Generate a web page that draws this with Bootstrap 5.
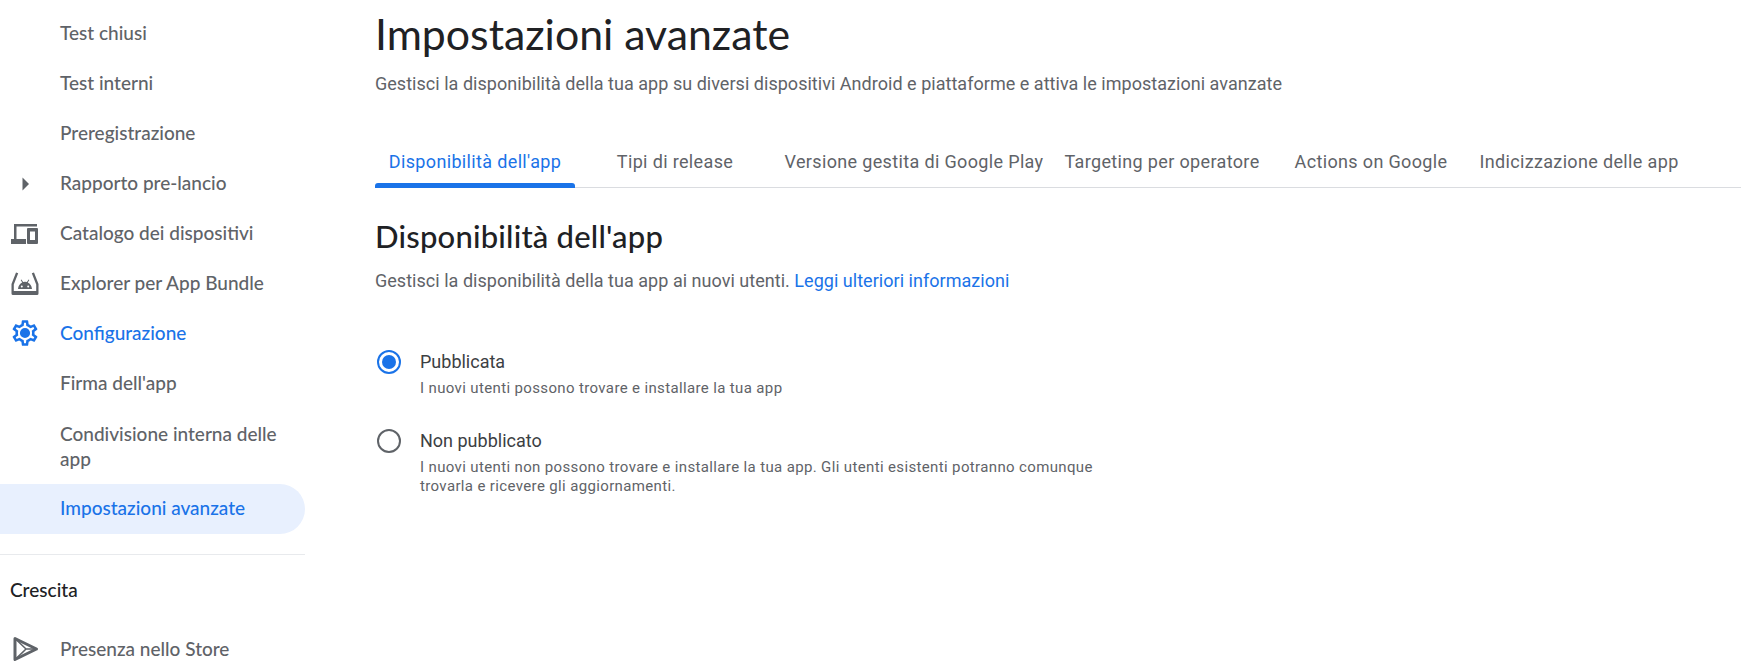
<!DOCTYPE html>
<html lang="it">
<head>
<meta charset="utf-8">
<title>Impostazioni avanzate</title>
<link href="https://cdn.jsdelivr.net/npm/bootstrap@5.3.0/dist/css/bootstrap.min.css" rel="stylesheet">
<style>
html,body{height:670px;overflow:hidden;background:#fff}
body{font-family:Roboto,"Liberation Sans",sans-serif;color:#5f6368}
.pg{height:670px}
.sb{width:305px;flex:none;font-family:Lato,"Noto Sans",sans-serif;padding-top:8px}
.sb-item{height:50px;display:flex;align-items:center;font-size:19px;color:#5f6368;text-decoration:none;position:relative;padding-left:60px;font-weight:500}
.sb-item svg{position:absolute;left:11px;top:11px;width:28px;height:28px}
.sb-item.sel{color:#1a73e8}
.sb-two{height:76px;line-height:25px;padding-right:20px}
.sb-on{background:#e8f0fe;color:#1a73e8;border-radius:0 25px 25px 0;padding-bottom:2px}
.sb-rule{border-top:1px solid #e8eaed;margin:20px 0 0}
.sb-head{font-size:19px;color:#202124;padding:21px 0 0 10px;height:69px;font-weight:500}
.mn{flex:1;min-width:0;padding-left:70px}
.ttl{font-family:Lato,"Noto Sans",sans-serif;font-size:42.8px;font-weight:400;color:#202124;line-height:50px;margin:9px 0 0}
.subt{font-size:18px;line-height:24px;margin:13px 0 0;letter-spacing:.03px}
.tabs{border-bottom:1px solid #dadce0;height:51px;margin-top:41px;padding:0;list-style:none;flex-wrap:nowrap}
.tb{display:block;position:relative;height:50px;line-height:50px;text-align:center;font-size:18px;font-weight:400;color:#5f6368;text-decoration:none;white-space:nowrap;letter-spacing:.35px;flex:none}
.tb.act{color:#1a73e8}
.tb.act::after{content:"";position:absolute;left:0;right:0;bottom:-1px;height:5px;background:#1a73e8;border-radius:3px 3px 0 0}
.tw1,.tw2,.tw5{width:200px}.tw3{width:278px}.tw4{width:218px}.tw6{width:216px}
.h2x{font-family:Lato,"Noto Sans",sans-serif;font-size:31px;font-weight:500;color:#202124;line-height:36px;margin:30px 0 0;letter-spacing:.2px}
.dsc{font-size:18px;line-height:24px;margin:15px 0 0;letter-spacing:.03px}
.dsc a{color:#1a73e8;text-decoration:none}
.opt{display:flex;width:720px}
.o1{margin-top:55px}.o2{margin-top:29px}
.rd{width:24px;height:24px;border-radius:50%;border:2px solid #5f6368;flex:none;margin:2px 19px 0 2px;display:flex;align-items:center;justify-content:center}
.rd.on{border-color:#1a73e8}
.rd.on::after{content:"";width:14px;height:14px;border-radius:50%;background:#1a73e8}
.olbl{font-size:18px;line-height:28px;color:#3c4043}
.osub{font-size:15px;line-height:19px;letter-spacing:.36px;color:#5f6368;padding-top:3px}
</style>
</head>
<body>
<div class="pg d-flex">
  <nav class="sb">
    <a class="sb-item" href="#">Test chiusi</a>
    <a class="sb-item" href="#">Test interni</a>
    <a class="sb-item" href="#">Preregistrazione</a>
    <a class="sb-item" href="#"><svg viewBox="0 0 28 28"><path d="M11.500 8.500 18 15l-6.500 6.500z" fill="#5f6368"/></svg>Rapporto pre-lancio</a>
    <a class="sb-item" href="#"><svg viewBox="0 0 28 28" fill="#5f6368"><path fill-rule="evenodd" d="M3 5h23v2.500H5.500V20H15v5H0v-5h3zM17 9h9a1 1 0 0 1 1 1v14a1 1 0 0 1-1 1h-9a1 1 0 0 1-1-1V10a1 1 0 0 1 1-1zm2 3.500V21h5v-8.500z"/></svg>Catalogo dei dispositivi</a>
    <a class="sb-item" href="#"><svg viewBox="0 0 28 28" fill="#5f6368"><path d="M5 3.500 .5 15v9.500A1.500 1.500 0 0 0 2 26h24a1.500 1.500 0 0 0 1.500-1.500V15L23 3.500l-2.200.8 4.400 11.200V22H2.800v-6.500L7.200 4.300z"/><path fill-rule="evenodd" d="M7 20c.3-3 1.900-5.400 4.200-6.500L9.700 11l.7-.5 1.700 2.600a7.500 7.500 0 0 1 3.800 0l1.700-2.600.7.500-1.500 2.500c2.300 1.100 3.900 3.500 4.200 6.500zm3.800-3.600a1 1 0 1 0 0 2 1 1 0 0 0 0-2zm6.400 0a1 1 0 1 0 0 2 1 1 0 0 0 0-2z"/></svg>Explorer per App Bundle</a>
    <a class="sb-item sel" href="#"><svg viewBox="1 1 22 22" fill="#1a73e8"><path fill-rule="evenodd" d="M19.430 12.980c.04-.32.070-.64.070-.98s-.03-.66-.07-.98l2.110-1.650a.5.500 0 0 0 .12-.64l-2-3.460a.5.500 0 0 0-.61-.22l-2.490 1a7.300 7.300 0 0 0-1.690-.98l-.38-2.650A.49.490 0 0 0 14 2h-4a.49.490 0 0 0-.49.420l-.38 2.650c-.61.250-1.170.59-1.690.98l-2.490-1a.49.490 0 0 0-.61.220l-2 3.460a.49.490 0 0 0 .12.640l2.110 1.650c-.04.320-.07.650-.07.980s.03.660.07.980l-2.110 1.650a.5.500 0 0 0-.12.640l2 3.460c.12.220.39.300.61.220l2.490-1c.52.400 1.080.730 1.690.980l.38 2.650c.03.240.24.420.49.420h4c.25 0 .46-.18.490-.42l.38-2.650c.61-.25 1.170-.59 1.690-.98l2.490 1c.23.090.49 0 .61-.22l2-3.460a.5.500 0 0 0-.12-.64zM17.450 11.270c.04.310.05.520.05.730s-.02.430-.05.730l-.14 1.130.89.700 1.080.840-.7 1.210-1.270-.51-1.040-.42-.9.680c-.43.320-.84.560-1.250.73l-1.060.43-.16 1.130-.2 1.350h-1.400l-.19-1.350-.16-1.130-1.060-.43c-.43-.18-.83-.41-1.230-.71l-.91-.7-1.060.43-1.270.51-.7-1.210 1.080-.84.890-.7-.14-1.130c-.03-.31-.05-.54-.05-.74s.02-.43.05-.73l.14-1.130-.89-.7-1.080-.84.7-1.210 1.270.51 1.040.42.9-.68c.43-.32.84-.56 1.250-.73l1.060-.43.160-1.130.2-1.350h1.390l.19 1.350.16 1.130 1.060.43c.43.180.83.410 1.230.710l.91.700 1.060-.43 1.270-.51.7 1.210-1.070.85-.89.700zM12 8a4 4 0 1 0 0 8 4 4 0 0 0 0-8z"/></svg>Configurazione</a>
    <a class="sb-item" href="#">Firma dell'app</a>
    <a class="sb-item sb-two" href="#">Condivisione interna delle app</a>
    <a class="sb-item sb-on" href="#">Impostazioni avanzate</a>
    <div class="sb-rule"></div>
    <div class="sb-head">Crescita</div>
    <a class="sb-item" href="#"><svg viewBox="0 0 28 28" fill="none" stroke="#5f6368"><path d="M4 3.500 25.500 14 4 24.500z" stroke-width="3" stroke-linejoin="round"/><path d="M4 3.500 15 14 4 24.500M10 19l5-5h10" stroke-width="1.500"/></svg>Presenza nello Store</a>
  </nav>
  <main class="mn">
    <h1 class="ttl">Impostazioni avanzate</h1>
    <p class="subt">Gestisci la disponibilità della tua app su diversi dispositivi Android e piattaforme e attiva le impostazioni avanzate</p>
    <ul class="tabs d-flex">
      <li><a class="tb act tw1" href="#">Disponibilità dell'app</a></li>
      <li><a class="tb tw2" href="#">Tipi di release</a></li>
      <li><a class="tb tw3" href="#">Versione gestita di Google Play</a></li>
      <li><a class="tb tw4" href="#">Targeting per operatore</a></li>
      <li><a class="tb tw5" href="#">Actions on Google</a></li>
      <li><a class="tb tw6" href="#">Indicizzazione delle app</a></li>
    </ul>
    <h2 class="h2x">Disponibilità dell'app</h2>
    <p class="dsc">Gestisci la disponibilità della tua app ai nuovi utenti. <a href="#">Leggi ulteriori informazioni</a></p>
    <div class="opt o1">
      <span class="rd on"></span>
      <div><div class="olbl">Pubblicata</div><div class="osub">I nuovi utenti possono trovare e installare la tua app</div></div>
    </div>
    <div class="opt o2">
      <span class="rd"></span>
      <div><div class="olbl">Non pubblicato</div><div class="osub">I nuovi utenti non possono trovare e installare la tua app. Gli utenti esistenti potranno comunque trovarla e ricevere gli aggiornamenti.</div></div>
    </div>
  </main>
</div>
<script src="https://cdn.jsdelivr.net/npm/bootstrap@5.3.0/dist/js/bootstrap.bundle.min.js"></script>
</body>
</html>
